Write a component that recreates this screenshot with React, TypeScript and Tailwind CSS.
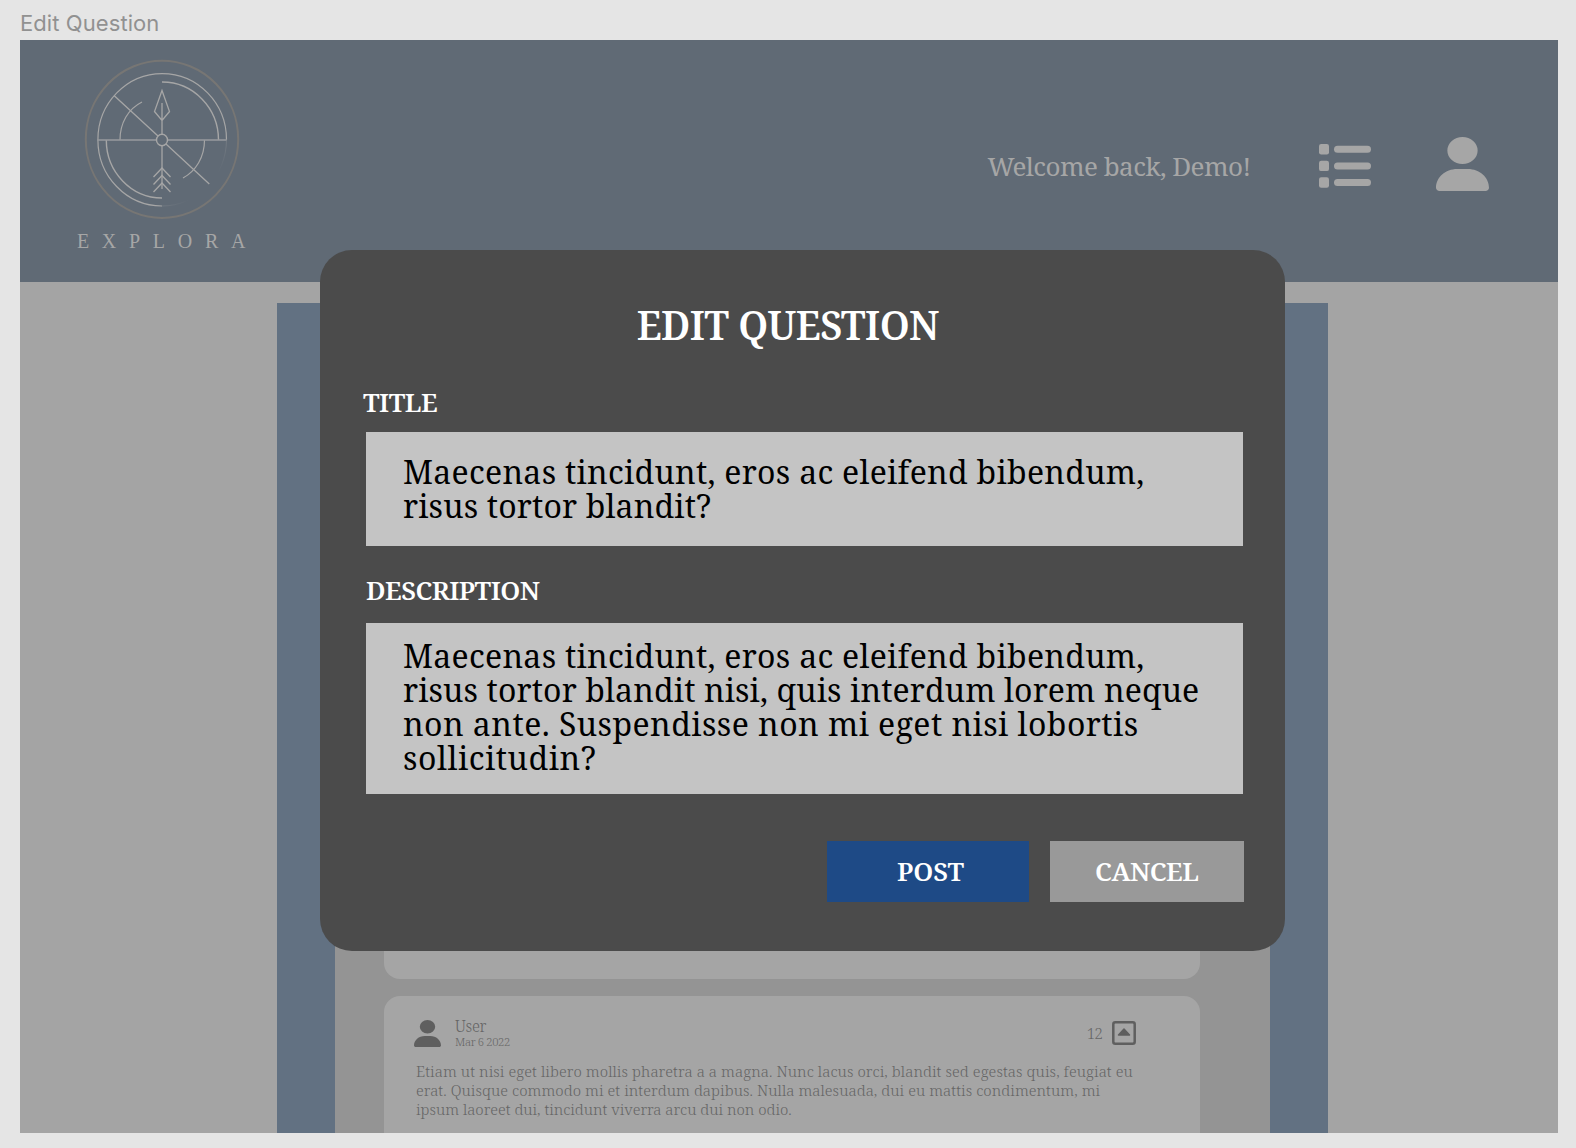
import type { ReactNode } from 'react';

function Logo() {
  return (
    <svg viewBox="0 0 160 164" className="h-[164px] w-[160px]" fill="none" stroke="#a6a6a6" strokeWidth="1.2">
      <defs>
        <linearGradient id="fade" gradientUnits="userSpaceOnUse" x1="95" y1="95" x2="124" y2="126">
          <stop offset="0" stopColor="#a6a6a6" stopOpacity="0.9" />
          <stop offset="1" stopColor="#a6a6a6" stopOpacity="0" />
        </linearGradient>
      </defs>
      <ellipse cx="80" cy="81.3" rx="76.2" ry="78.6" stroke="#777674" strokeWidth="2" />
      <path d="M144.5 81.7A64.3 66.2 0 1 0 80 148" />
      <path d="M144.5 81.7A64.3 66.2 0 0 1 80 148" stroke="url(#fade)" strokeWidth="0.8" />
      <path d="M80 24A56.3 58 0 0 1 136.5 82M24.3 82A56 58 0 0 0 80 140" strokeWidth="1.4" />
      <path d="M38 82C38 65 46 51 60 44M122.5 82C122.5 99 114 113 101 120" />
      <path d="M32 37.5L76 78M84 86L127.3 126" strokeWidth="1.3" />
      <path d="M15.500 82H74M86 82H144.500" stroke="#989b9f" strokeWidth="1.7" />
      <ellipse cx="80" cy="82" rx="5.500" ry="5.700" strokeWidth="1.4" />
      <path d="M80 32.500L87.500 53.500L80 62.500L72.500 53.500ZM80 45V76M80 88V131" strokeWidth="1.3" />
      <path d="M71.500 119L80 110L88.500 119M71.500 126.500L80 117.500L88.500 126.500M71.500 134L80 125L88.500 134" strokeWidth="1.3" />
    </svg>
  );
}

function PersonIcon({ className }: { className: string }) {
  return (
    <svg viewBox="0 0 448 512" preserveAspectRatio="none" fill="currentColor" className={className}>
      <path d="M224 256a128 128 0 1 0 0-256a128 128 0 1 0 0 256zM178.300 304C79.800 304 0 383.800 0 482.300C0 498.700 13.300 512 29.700 512H418.300C434.700 512 448 498.700 448 482.300C448 383.800 368.200 304 269.700 304Z" />
    </svg>
  );
}

function ListIcon() {
  return (
    <svg viewBox="0 0 52 44" fill="#a6a6a6" className="h-[44px] w-[52px]">
      {[0, 16.7, 33.3].map((y) => (
        <g key={y}>
          <rect x="0" y={y} width="10" height="10.400" rx="2.200" />
          <rect x="15" y={y + 1.7} width="37" height="7" rx="3.500" />
        </g>
      ))}
    </svg>
  );
}

function UpvoteIcon() {
  return (
    <svg viewBox="0 0 24 24" className="h-6 w-6" fill="none" stroke="#5f5f5f">
      <rect x="1.300" y="1.300" width="21.400" height="21.400" rx="2" strokeWidth="2.500" />
      <path d="M12 8L17.500 14H6.500Z" fill="#5f5f5f" strokeWidth="1.500" strokeLinejoin="round" />
    </svg>
  );
}

function Line({ className = '', children }: { className?: string; children: ReactNode }) {
  return <span className={`block whitespace-nowrap ${className}`}>{children}</span>;
}

function Header() {
  return (
    <header className="flex h-[242px] items-start bg-[#606a75] text-[#a6a6a6]">
      <div className="ml-[56px] flex w-[172px] flex-col items-center pt-[17.500px]">
        <Logo />
        <div className="mt-[7.500px] whitespace-nowrap pl-[11px] font-['Liberation_Serif',serif] text-[20px] leading-6 tracking-[12.700px]">
          EXPLORA
        </div>
      </div>
      <div className="ml-auto flex items-start pr-[69px]">
        <p className="mt-[105.500px] whitespace-nowrap text-[26px] leading-10 tracking-[-0.550px]">Welcome back, Demo!</p>
        <div className="ml-[68px] mt-[103.500px]">
          <ListIcon />
        </div>
        <PersonIcon className="ml-[65px] mt-[96.500px] h-[54px] w-[53px]" />
      </div>
    </header>
  );
}

function Answer() {
  return (
    <article className="mt-[17px] h-[137px] rounded-t-[16px] bg-[#a5a5a5] pl-[30px] pr-[64px] pt-[23px] text-[#666666]">
      <div className="flex h-[29px]">
        <PersonIcon className="mt-px h-[27px] w-[27px] text-[#5f5f5f]" />
        <div className="ml-[14px] font-light">
          <Line className="text-[15.500px] leading-[15px] tracking-[-0.300px]">User</Line>
          <Line className="text-[11.200px] leading-[16px] tracking-[-0.350px]">Mar 6 2022</Line>
        </div>
        <div className="ml-auto flex items-start gap-2.5 pt-[2px]">
          <span className="text-[15px] font-light leading-6 tracking-[-0.800px]">12</span>
          <UpvoteIcon />
        </div>
      </div>
      <p className="ml-[2px] mt-[14px] text-[15px] font-light leading-[19.200px]">
        <Line className="tracking-[0.090px]">
          Etiam ut nisi eget libero mollis pharetra a a magna. Nunc lacus orci, blandit sed egestas quis, feugiat eu
        </Line>
        <Line className="tracking-[0.070px]">
          erat. Quisque commodo mi et interdum dapibus. Nulla malesuada, dui eu mattis condimentum, mi
        </Line>
        <Line>ipsum laoreet dui, tincidunt viverra arcu dui non odio.</Line>
      </p>
    </article>
  );
}

function EditDialog() {
  return (
    <section
      role="dialog"
      className="absolute left-[300px] top-[210px] h-[700.500px] w-[965px] rounded-[32px] bg-[#4b4b4b] pl-[46px] pr-[42.500px] pt-[55px] text-white"
    >
      <h1 className="pr-[33px] text-center text-[39px] font-semibold leading-10 tracking-[-0.600px]">EDIT QUESTION</h1>
      <h2 className="-ml-[3px] mt-[41px] text-[26px] font-semibold leading-8 tracking-[-0.500px]">TITLE</h2>
      <div className="mt-[13.500px] h-[114px] bg-[#c4c4c4] pl-[37px] pt-[23px] text-[32px] leading-[34px] text-black">
        <Line className="tracking-[0.280px]">Maecenas tincidunt, eros ac eleifend bibendum,</Line>
        <Line className="tracking-[0.150px]">risus tortor blandit?</Line>
      </div>
      <h2 className="mt-[28.500px] text-[26px] font-semibold leading-8 tracking-[-0.500px]">DESCRIPTION</h2>
      <div className="mt-[17px] h-[171px] bg-[#c4c4c4] pl-[37px] pt-[15.500px] text-[32px] leading-[34.100px] text-black">
        <Line className="tracking-[0.280px]">Maecenas tincidunt, eros ac eleifend bibendum,</Line>
        <Line className="tracking-[0.120px]">risus tortor blandit nisi, quis interdum lorem neque</Line>
        <Line className="tracking-[0.450px]">non ante. Suspendisse non mi eget nisi lobortis</Line>
        <Line className="tracking-[0.550px]">sollicitudin?</Line>
      </div>
      <div className="mt-[47px] -mr-px flex justify-end gap-[21px] text-[26px] font-semibold tracking-[-0.500px]">
        <button className="h-[61px] w-[202px] bg-[#1e4a86] pl-[5px] tracking-normal">POST</button>
        <button className="h-[61px] w-[193.500px] bg-[#999999]">CANCEL</button>
      </div>
    </section>
  );
}

export default function App() {
  return (
    <div className="h-[1148px] w-[1576px] overflow-hidden bg-[#e5e5e5] pl-[20px] font-['Roboto_Slab','Noto_Serif',serif]">
      <div className="h-[40px] pt-[8px] font-['Inter',sans-serif] text-[22px] leading-[30px] tracking-[0.080px] text-[#919191]">
        Edit Question
      </div>
      <main className="relative flex h-[1093px] w-[1537.500px] flex-col overflow-hidden bg-[#a4a4a4]">
        <Header />
        <div className="ml-[257px] mt-[21.500px] w-[1051px] flex-1 bg-[#627182] pl-[58px]">
          <div className="h-full w-[935px] bg-[#949494] pl-[49px] pr-[70px]">
            <div className="h-[676px] rounded-b-[16px] bg-[#a5a5a5]" />
            <Answer />
          </div>
        </div>
        <EditDialog />
      </main>
    </div>
  );
}
